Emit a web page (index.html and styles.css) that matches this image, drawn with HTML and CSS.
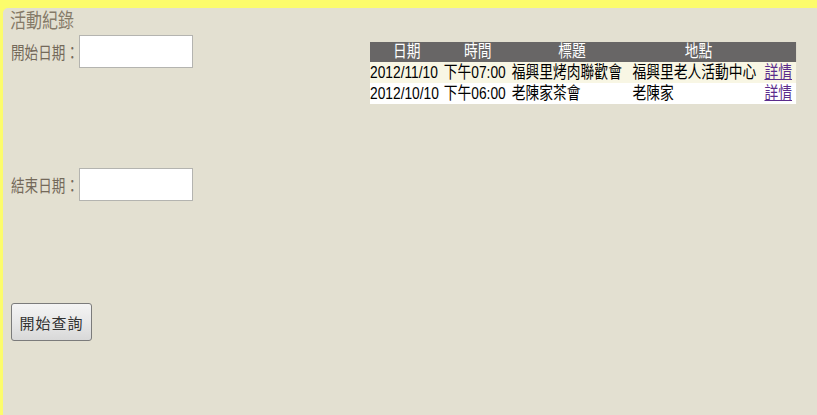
FILE: index.html
```html
<!DOCTYPE html>
<html lang="zh-Hant">
<head>
<meta charset="utf-8">
<title>活動紀錄</title>
<link rel="stylesheet" href="styles.css">
</head>
<body>
<div class="page">
  <div class="form">
    <div class="title"><span class="sq">活動紀錄</span></div>
    <div class="field first">
      <span class="label"><span class="sq">開始日期：</span></span>
      <input class="box" type="text">
    </div>
    <div class="field second">
      <span class="label"><span class="sq">結束日期：</span></span>
      <input class="box" type="text">
    </div>
    <button class="btn" type="button">開始查詢</button>
  </div>
  <div class="listwrap">
    <table class="list">
      <thead>
        <tr><th class="c1">日期</th><th class="c2">時間</th><th class="c3">標題</th><th class="c4">地點</th><th class="c5"></th></tr>
      </thead>
      <tbody>
        <tr><td>2012/11/10</td><td>下午07:00</td><td>福興里烤肉聯歡會</td><td>福興里老人活動中心</td><td><a href="#">詳情</a></td></tr>
        <tr><td>2012/10/10</td><td>下午06:00</td><td>老陳家茶會</td><td>老陳家</td><td><a href="#">詳情</a></td></tr>
      </tbody>
    </table>
  </div>
</div>
</body>
</html>
```
FILE: styles.css
```css
html, body {
  margin: 0;
  padding: 0;
  height: 100%;
}
body {
  background: #fcfc6c;
  padding: 8px 0 0 3px;
  box-sizing: border-box;
  font-family: "Liberation Sans", "Noto Sans CJK TC", sans-serif;
}
.page {
  background: #e3e0d1;
  height: 100%;
  border-top-left-radius: 5px;
  display: flex;
  align-items: flex-start;
}
.sq {
  display: inline-block;
  transform: scaleX(0.8);
  transform-origin: left center;
  white-space: nowrap;
}
.form {
  width: 367px;
  flex: none;
  padding-left: 7px;
  box-sizing: border-box;
  display: flex;
  flex-direction: column;
  align-items: flex-start;
}
.title {
  font-size: 20px;
  line-height: 22px;
  color: #857a68;
  margin-top: 2px;
  height: 22px;
  width: 80px;
  white-space: nowrap;
}
.field {
  display: flex;
  align-items: center;
}
.field.first { margin-top: 3px; }
.field.second { margin-top: 100px; }
.label {
  font-size: 17px;
  color: #74695a;
  width: 68px;
  padding-left: 1px;
  flex: none;
  white-space: nowrap;
}
.box {
  width: 114px;
  height: 33px;
  box-sizing: border-box;
  margin: 0;
  border: 1px solid #b4b4b0;
  background: #fff;
}
.btn {
  margin-top: 102px;
  margin-left: 1px;
  width: 81px;
  height: 38px;
  border: 1px solid #7b7b7b;
  border-radius: 3px;
  background: linear-gradient(#f4f4f4, #e8e8e8 50%, #d8d8d8);
  font-family: "Noto Sans CJK TC", sans-serif;
  font-size: 15px;
  letter-spacing: 1px;
  color: #333;
  padding: 0;
}
.listwrap {
  margin-top: 34px;
  width: 426px;
  flex: none;
}
.list {
  transform: scaleX(0.81);
  transform-origin: left top;
  border-collapse: collapse;
  border-spacing: 0;
  width: 526px;
  table-layout: fixed;
  font-size: 17px;
  line-height: 20px;
  white-space: nowrap;
  background: linear-gradient(#686666 0 20px, #f8f6e4 20px 41px, #fff 41px);
}
.list th {
  color: #fff;
  font-weight: normal;
  padding: 0;
  height: 20px;
}
.list td {
  padding: 0;
  color: #000;
  height: 21px;
}
.c1 { width: 91px; }
.c2 { width: 84px; }
.c3 { width: 149px; }
.c4 { width: 163px; }
.c5 { width: 39px; }
.list a {
  color: #5b2c8c;
  text-decoration: underline;
}
```
